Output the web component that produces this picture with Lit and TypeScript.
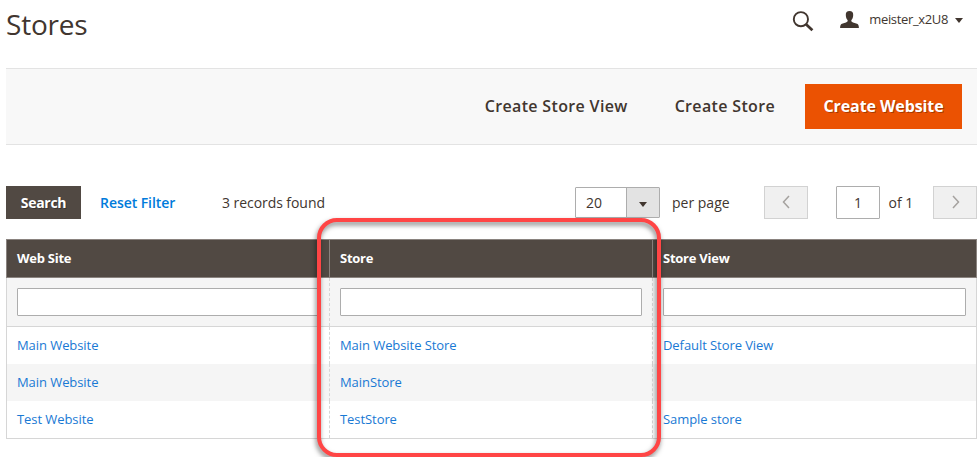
import { LitElement, html, css } from "lit";
import { customElement } from "lit/decorators.js";

const ROWS = [
  ["Main Website", "Main Website Store", "Default Store View"],
  ["Main Website", "MainStore", ""],
  ["Test Website", "TestStore", "Sample store"],
];

@customElement("stores-grid")
class StoresGrid extends LitElement {
  static styles = css`
    :host { display: block; }
    .row { display: grid; grid-template-columns: 322px 323px 1fr; }
    .head {
      height: 39px; box-sizing: border-box; background: #514943; letter-spacing: -0.25px;
      border: 1px solid #8a837f; color: #fff; font-weight: 700; line-height: 37px;
    }
    .body { border: 1px solid #d6d6d6; border-top: 0; }
    .cell { padding: 0 10px; box-sizing: border-box; white-space: nowrap; }
    .cell + .cell { border-left: 1px dashed #d6d6d6; }
    .head .cell + .cell { border-left: 1px solid #8a837f; }
    .filters { height: 49px; box-sizing: border-box; background: #f5f5f5; border-bottom: 1px solid #d6d6d6; }
    .filters .cell { padding-top: 10px; }
    .filter {
      display: block; width: 100%; height: 28px; box-sizing: border-box; margin: 0; padding: 0 8px;
      border: 1px solid #adadad; border-radius: 1px; background: #fff; outline: none;
    }
    .data { height: 37px; line-height: 36px; color: #1979d4; letter-spacing: -0.07px; }
    .data.even { background: #f5f5f5; }
  `;
  render() {
    return html`
      <div class="row head">
        ${["Web Site", "Store", "Store View"].map((t) => html`<div class="cell">${t}</div>`)}
      </div>
      <div class="body">
        <div class="row filters">
          ${[0, 1, 2].map(() => html`<div class="cell"><input class="filter" type="text" /></div>`)}
        </div>
        ${ROWS.map((r, i) => html`
          <div class="row data ${i % 2 ? "even" : ""}">
            ${r.map((t) => html`<div class="cell">${t}</div>`)}
          </div>`)}
      </div>`;
  }
}

@customElement("app-root")
class AppRoot extends LitElement {
  static styles = css`
    :host {
      display: block; position: relative; width: 980px; height: 457px; overflow: hidden;
      box-sizing: border-box; padding: 0 3px 0 6px; background: #fff; color: #41362f;
      font-family: "Open Sans", "Noto Sans", sans-serif; font-size: 13px;
    }
    .top { display: flex; height: 68px; align-items: flex-start; }
    .title { margin: 0; flex: 1; font-size: 28px; font-weight: 400; line-height: 48px; letter-spacing: -0.2px; }
    .glass { margin: 10px 26px 0 0; width: 22px; height: 22px; }
    .person { margin: 11px 10px 0 0; width: 19px; height: 17px; }
    .user { line-height: 38px; font-size: 13px; letter-spacing: -0.35px; }
    .tri { margin: 18px 14px 0 7px; width: 8px; height: 5px; }
    .bar {
      display: flex; justify-content: flex-end; align-items: center; height: 77px; box-sizing: border-box;
      padding-right: 15px; border: 1px solid #e3e3e3; border-left: 0; border-right: 0; background: #f8f8f8;
      font-size: 16px; font-weight: 600; letter-spacing: 0.34px; white-space: nowrap;
    }
    .link { margin-right: 47px; line-height: 22px; padding-bottom: 2px; }
    .link.last { margin-right: 30px; }
    .primary {
      width: 157px; height: 45px; line-height: 44px; text-align: center; background: #eb5202; color: #fff;
      font-weight: 700; letter-spacing: -0.1px; text-shadow: 1px 1px 0 rgba(0, 0, 0, 0.3);
    }
    .tools { display: flex; height: 33px; margin: 41px 0 20px; line-height: 33px; font-size: 14px; white-space: nowrap; }
    .search {
      width: 75px; background: #514943; color: #fff; font-weight: 700; letter-spacing: -0.3px; text-align: center;
      text-shadow: 1px 1px 0 rgba(0, 0, 0, 0.3);
    }
    .reset { width: 122px; margin-left: 19px; color: #007bdb; font-weight: 600; letter-spacing: -0.06px; }
    .found { flex: 1; letter-spacing: -0.06px; }
    .select {
      display: flex; width: 85px; height: 31px; margin-top: 1px; box-sizing: border-box;
      border: 1px solid #adadad; line-height: 30px; border-radius: 1px;
    }
    .amount { flex: 1; padding-left: 10px; }
    .arrow {
      display: flex; align-items: center; justify-content: center; width: 32px; background: #e3e3e3;
      border-left: 1px solid #adadad;
    }
    .arrow svg { width: 8px; height: 5px; margin-top: 3px; }
    .per { width: 104px; padding-left: 12px; box-sizing: border-box; }
    .nav {
      display: flex; align-items: center; justify-content: center; width: 44px; box-sizing: border-box;
      border: 1px solid #d2d2d2; background: #f0f0f0;
    }
    .nav svg { width: 9px; height: 14px; margin-bottom: 2px; }
    .page {
      width: 44px; box-sizing: border-box; margin-left: 28px; border: 1px solid #adadad; border-radius: 1px;
      text-align: center; line-height: 31px;
    }
    .of { width: 53px; padding-left: 8.5px; box-sizing: border-box; }
    .mark {
      position: absolute; left: 317px; top: 218px; width: 344px; height: 239px; box-sizing: border-box;
      border: 4px solid #ff4545; border-radius: 20px; filter: drop-shadow(-1px 3px 2.5px rgba(0, 0, 0, 0.5));
    }
  `;
  render() {
    return html`
      <header class="top">
        <h1 class="title">Stores</h1>
        <svg class="glass" viewBox="0 0 22 22" fill="none" stroke="#41362f">
          <circle cx="8.9" cy="9.2" r="7.1" stroke-width="1.9" />
          <path d="M14 14.3l6.4 5.9" stroke-width="2.8" />
        </svg>
        <svg class="person" viewBox="0 0 19 17">
          <path d="M9.5 0C6.9 0 5.7 1.5 5.8 4c.1 2.5.8 4.2 1.9 5.3 0 1.3-.5 1.8-1.7 2.2L2 12.7C.6 13.200.1 14.600.1 17h18.800c0-2.400-.5-3.800-1.900-4.300l-4-1.200c-1.200-.4-1.700-.9-1.700-2.200 1.100-1.100 1.800-2.800 1.900-5.300C13.300 1.500 12.100 0 9.500 0z" fill="#41362f" />
        </svg>
        <span class="user">meister_x2U8</span>
        <svg class="tri" viewBox="0 0 8 5"><path d="M0 0h8L4 5z" fill="#41362f" /></svg>
      </header>
      <div class="bar">
        <span class="link">Create Store View</span>
        <span class="link last">Create Store</span>
        <div class="primary">Create Website</div>
      </div>
      <div class="tools">
        <div class="search">Search</div>
        <span class="reset">Reset Filter</span>
        <span class="found">3 records found</span>
        <div class="select">
          <span class="amount">20</span>
          <span class="arrow"><svg viewBox="0 0 8 5"><path d="M0 0h8L4 5z" fill="#41362f" /></svg></span>
        </div>
        <span class="per">per page</span>
        <div class="nav"><svg viewBox="0 0 9 14" fill="none" stroke="#a5a29f" stroke-width="1.5"><path d="M7 1L1.5 7L7 13" /></svg></div>
        <div class="page">1</div>
        <span class="of">of 1</span>
        <div class="nav"><svg viewBox="0 0 9 14" fill="none" stroke="#a5a29f" stroke-width="1.5"><path d="M2 1L7.5 7L2 13" /></svg></div>
      </div>
      <stores-grid></stores-grid>
      <div class="mark"></div>`;
  }
}
